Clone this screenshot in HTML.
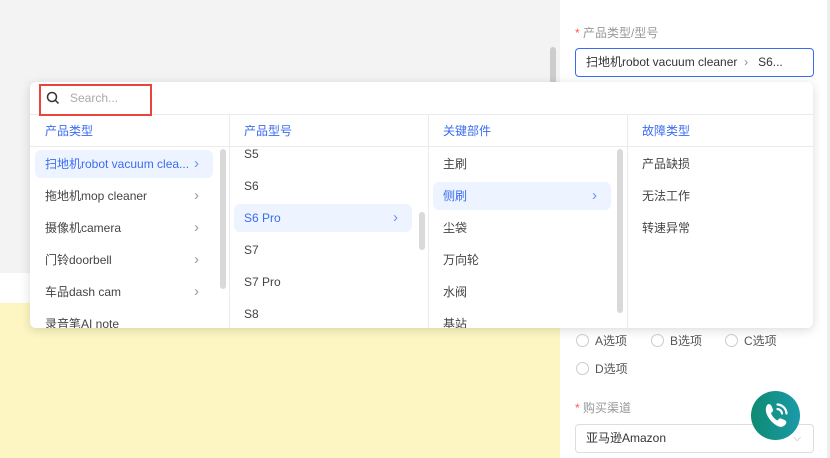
<!DOCTYPE html>
<html><head><meta charset="utf-8"><style>
*{margin:0;padding:0;box-sizing:border-box}
body{width:830px;height:458px;overflow:hidden;position:relative;background:#f3f3f3;font-family:"Liberation Sans","Noto Sans CJK SC",sans-serif;font-size:12px;color:#444}
.abs{position:absolute}
.row{position:absolute;height:28px;line-height:28px;padding-left:10px;border-radius:6px;white-space:nowrap}
.sel{background:#edf4ff;color:#3b6cf0}
.chev{position:absolute;right:14px;top:0;color:#999;font-size:15px;font-weight:300}
.sel .chev{color:#6a8ff5}
.hdr{position:absolute;top:116px;height:30px;line-height:30px;color:#3b6cf0;font-size:12px}
.sb{position:absolute;width:6px;border-radius:3px;background:#d9d9d9}
.radio{position:absolute;width:13px;height:13px;border:1px solid #ccc;border-radius:50%;background:#fff}
.lbl{position:absolute;color:#555;font-size:12px}
</style></head><body>
<div class="abs" style="left:0;top:273px;width:560px;height:30px;background:#fff"></div>
<div class="abs" style="left:0;top:303px;width:560px;height:155px;background:#fdf6c2"></div>
<div class="sb" style="left:550px;top:47px;height:40px;background:#ccc"></div>
<div class="abs" style="left:560px;top:0;width:270px;height:458px;background:#fff;border-right:3px solid #eee"></div>
<div class="abs" style="left:575px;top:24px;color:#999;font-size:12px"><span style="color:#f55">*</span> 产品类型/型号</div>
<div class="abs" style="left:575px;top:48px;width:239px;height:29px;border:1px solid #3b6cf0;border-radius:4px;line-height:27px;padding-left:10px;color:#333;font-size:12px">扫地机robot vacuum cleaner &nbsp;<span style="color:#888">›</span>&nbsp;&nbsp; S6...</div>

<div class="radio" style="left:576px;top:334px"></div><div class="lbl" style="left:595px;top:332px">A选项</div>
<div class="radio" style="left:651px;top:334px"></div><div class="lbl" style="left:670px;top:332px">B选项</div>
<div class="radio" style="left:725px;top:334px"></div><div class="lbl" style="left:744px;top:332px">C选项</div>
<div class="radio" style="left:576px;top:362px"></div><div class="lbl" style="left:595px;top:360px">D选项</div>
<div class="abs" style="left:575px;top:399px;color:#999"><span style="color:#f55">*</span> 购买渠道</div>
<div class="abs" style="left:575px;top:424px;width:239px;height:29px;border:1px solid #ddd;border-radius:4px;line-height:27px;padding-left:10px;color:#333;background:#fff">亚马逊Amazon<span style="position:absolute;right:12px;color:#aaa;font-size:10px">⌵</span></div>
<div class="abs" style="left:751px;top:391px;width:49px;height:49px;border-radius:50%;background:linear-gradient(90deg,#0f8a72,#1a9aa8)">
<svg width="49" height="49" viewBox="0 0 49 49"><path d="M16 14c2-1.5 3.5-1 4.5 1l1.5 3.5c.5 1.5-.5 2.5-2 3.5 1 3 3.5 6 6.5 7.5 1-1.5 2-2.5 3.5-2l3.5 1.5c2 1 2.5 2.5 1 4.5-2 2.5-5 3-8 1.5-5.5-3-10-8.5-11.5-14-.5-3 0-5 1-7z" fill="#fff"/><path d="M26.5 13.5a9.5 9.5 0 0 1 9 9M26.5 18a5 5 0 0 1 4.5 4.5" stroke="#fff" stroke-width="2.2" fill="none" stroke-linecap="round"/></svg></div>

<div class="abs" style="left:30px;top:82px;width:783px;height:246px;background:#fff;border-radius:6px;box-shadow:0 2px 10px rgba(0,0,0,.15);overflow:hidden">
 <div class="abs" style="left:0;top:32px;width:783px;height:1px;background:#eaeaef"></div>
 <div class="abs" style="left:0;top:64px;width:783px;height:1px;background:#eaeaef"></div>
 <div class="abs" style="left:199px;top:32px;width:1px;height:214px;background:#eaeaef"></div>
 <div class="abs" style="left:398px;top:32px;width:1px;height:214px;background:#eaeaef"></div>
 <div class="abs" style="left:597px;top:32px;width:1px;height:214px;background:#eaeaef"></div>
</div>
<div class="abs" style="left:39px;top:84px;width:113px;height:32px;border:2px solid #e8453c"></div>
<svg class="abs" style="left:46px;top:91px" width="14" height="14" viewBox="0 0 14 14"><circle cx="6" cy="6" r="4.5" stroke="#333" stroke-width="1.5" fill="none"/><path d="M9.5 9.5l3 3" stroke="#333" stroke-width="1.5"/></svg>
<div class="abs" style="left:70px;top:91px;color:#aaa;font-size:12px">Search...</div>
<div class="hdr" style="left:45px">产品类型</div>
<div class="hdr" style="left:244px">产品型号</div>
<div class="hdr" style="left:443px">关键部件</div>
<div class="hdr" style="left:642px">故障类型</div>

<div class="row sel" style="left:35px;top:150px;width:178px">扫地机robot vacuum clea...<span class="chev">›</span></div>
<div class="row" style="left:35px;top:182px;width:178px">拖地机mop cleaner<span class="chev">›</span></div>
<div class="row" style="left:35px;top:214px;width:178px">摄像机camera<span class="chev">›</span></div>
<div class="row" style="left:35px;top:246px;width:178px">门铃doorbell<span class="chev">›</span></div>
<div class="row" style="left:35px;top:278px;width:178px">车品dash cam<span class="chev">›</span></div>
<div class="row" style="left:35px;top:310px;width:178px;height:18px;overflow:hidden">录音笔AI note</div>
<div class="sb" style="left:220px;top:149px;height:140px"></div>

<div class="row" style="left:234px;top:140px;width:178px">S5</div>
<div class="row" style="left:234px;top:172px;width:178px">S6</div>
<div class="row sel" style="left:234px;top:204px;width:178px">S6 Pro<span class="chev">›</span></div>
<div class="row" style="left:234px;top:236px;width:178px">S7</div>
<div class="row" style="left:234px;top:268px;width:178px">S7 Pro</div>
<div class="row" style="left:234px;top:300px;width:178px">S8</div>
<div class="sb" style="left:419px;top:212px;height:38px"></div>

<div class="row" style="left:433px;top:150px;width:178px">主刷</div>
<div class="row sel" style="left:433px;top:182px;width:178px">侧刷<span class="chev">›</span></div>
<div class="row" style="left:433px;top:214px;width:178px">尘袋</div>
<div class="row" style="left:433px;top:246px;width:178px">万向轮</div>
<div class="row" style="left:433px;top:278px;width:178px">水阀</div>
<div class="row" style="left:433px;top:310px;width:178px;height:18px;overflow:hidden">基站</div>
<div class="sb" style="left:617px;top:149px;height:164px"></div>

<div class="row" style="left:632px;top:150px;width:170px">产品缺损</div>
<div class="row" style="left:632px;top:182px;width:170px">无法工作</div>
<div class="row" style="left:632px;top:214px;width:170px">转速异常</div>
</body></html>
